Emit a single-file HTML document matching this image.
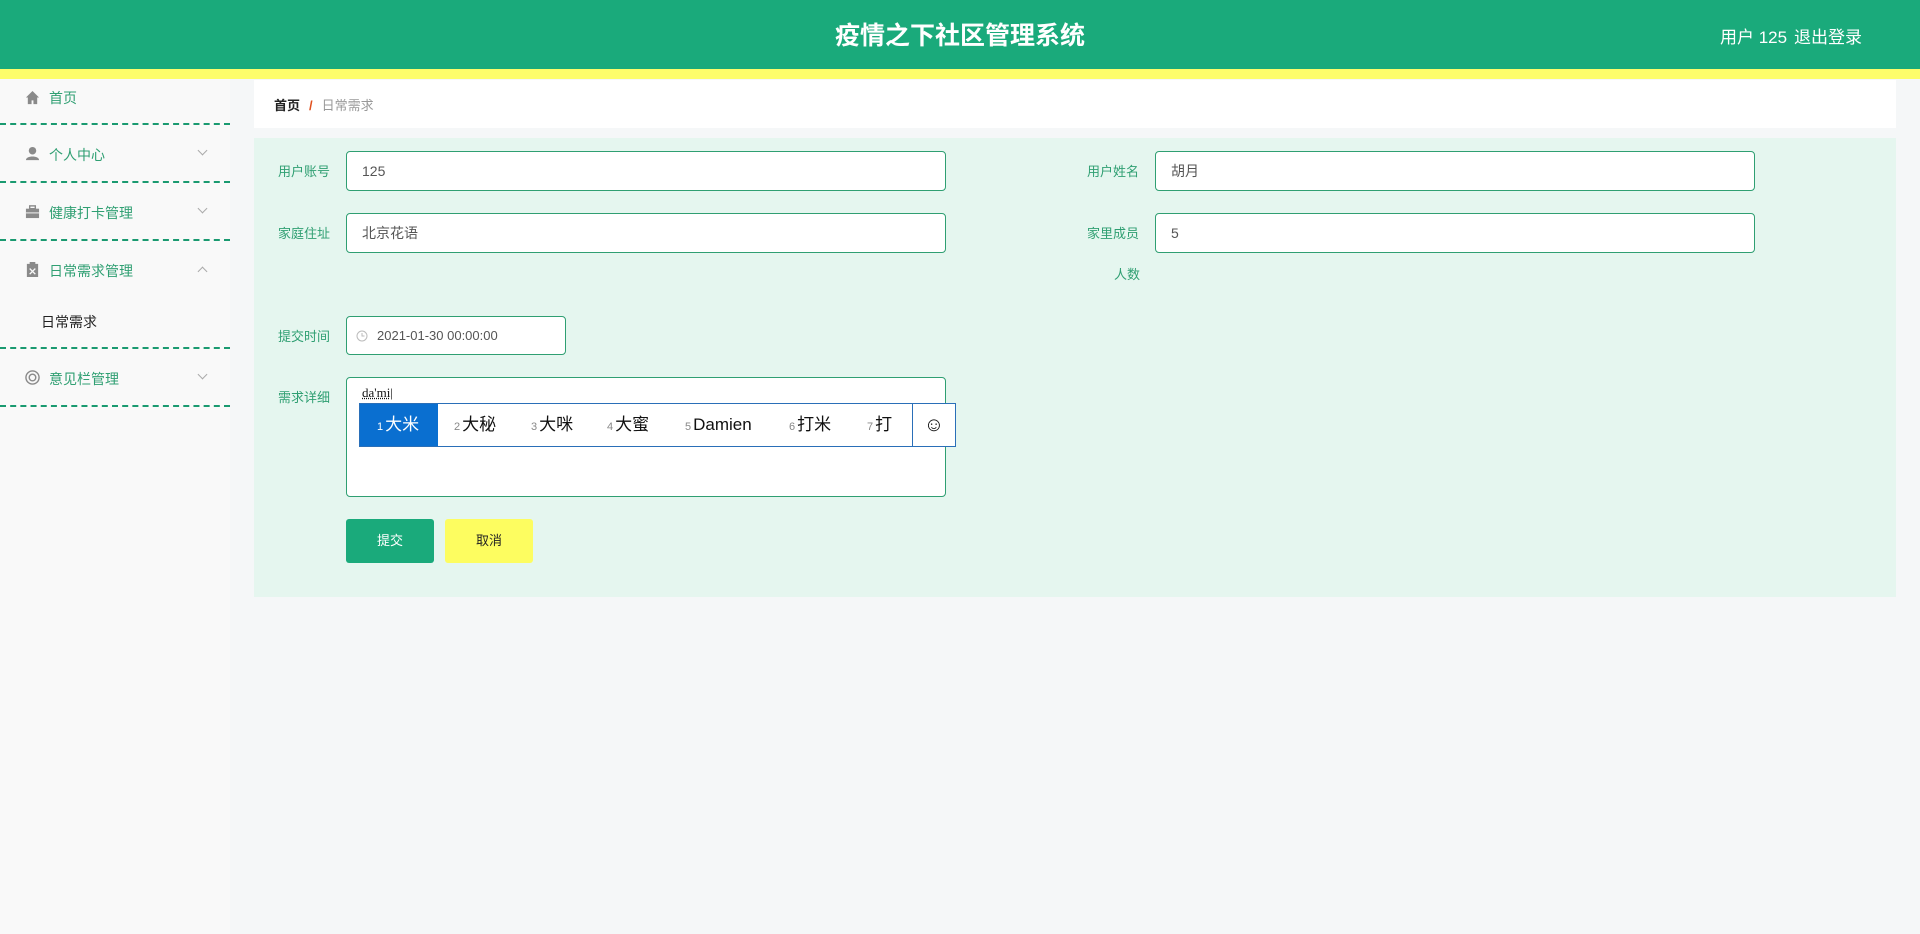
<!DOCTYPE html>
<html><head><meta charset="utf-8"><style>
*{box-sizing:border-box;margin:0;padding:0}
body{width:1920px;height:934px;background:#f5f7f8;font-family:"Liberation Sans","Noto Sans CJK SC",sans-serif;position:relative;overflow:hidden;font-size:14px}
.hdr{position:absolute;left:0;top:0;width:1920px;height:69px;background:#1aaa7b}
.yel{position:absolute;left:0;top:69px;width:1920px;height:10px;background:#fdfd6a}
.title{position:absolute;left:0;width:1920px;top:16px;text-align:center;color:#fff;font-size:25px;font-weight:bold}
.hr{position:absolute;top:23px;color:#fff;font-size:17px}
.side{position:absolute;left:0;top:79px;width:230px;height:855px;background:#f9f9f9}
.dash{position:absolute;left:0;width:230px;border-top:2px dashed #1a9a70}
.mi{position:absolute;left:49px;color:#2f9f72;font-size:14px}
.ic{position:absolute;left:25px;width:15px;height:15px}
.arr{position:absolute;left:199px;width:7px;height:7px;border-right:1px solid #aaa;border-bottom:1px solid #aaa}
.box{position:absolute;background:#fff}
.form{position:absolute;left:254px;top:138px;width:1642px;height:459px;background:#e5f6ef}
.lab{position:absolute;color:#2f9f72;font-size:13px}
.inp{position:absolute;background:#fff;border:1px solid #2f9f72;border-radius:4px;color:#555;font-size:14px;padding-left:15px;line-height:38px}
.btn{position:absolute;top:519px;height:44px;width:88px;border-radius:3px;text-align:center;line-height:44px;font-size:13px}
.ime{position:absolute;left:359px;top:403px;width:597px;height:44px;background:#fff;border:1px solid #2a6fb8;font-size:17px;color:#111;line-height:42px}
.ime span{position:absolute;top:0}
.ime small{font-size:11px;color:#888;margin-right:2px}
</style></head><body>
<div class="hdr"></div><div class="yel"></div>
<div class="title">疫情之下社区管理系统</div>
<div class="hr" style="left:1720px">用户 125</div>
<div class="hr" style="left:1794px">退出登录</div>

<div class="side"></div>
<svg class="ic" style="top:90px" viewBox="0 0 16 16"><path d="M8 1L1 8h2v7h4v-4h2v4h4V8h2z" fill="#8a8a8a"/></svg>
<div class="mi" style="top:88px">首页</div>
<div class="dash" style="top:123px"></div>
<svg class="ic" style="top:146px" viewBox="0 0 16 16"><circle cx="8" cy="5" r="4" fill="#8a8a8a"/><path d="M1 15c0-5 14-5 14 0z" fill="#8a8a8a"/></svg>
<div class="mi" style="top:145px">个人中心</div><div class="arr" style="top:147px;transform:rotate(45deg)"></div>
<div class="dash" style="top:181px"></div>
<svg class="ic" style="top:204px" viewBox="0 0 16 16"><rect x="1" y="5" width="14" height="10" fill="#8a8a8a"/><rect x="5" y="2" width="6" height="3" fill="none" stroke="#8a8a8a" stroke-width="1.5"/><rect x="1" y="9" width="14" height="1" fill="#f9f9f9"/></svg>
<div class="mi" style="top:203px">健康打卡管理</div><div class="arr" style="top:205px;transform:rotate(45deg)"></div>
<div class="dash" style="top:239px"></div>
<svg class="ic" style="top:262px" viewBox="0 0 16 16"><rect x="2" y="2" width="12" height="14" fill="#8a8a8a"/><rect x="5" y="0" width="6" height="3" fill="#8a8a8a"/><path d="M5 7l6 6M11 7l-6 6" stroke="#f9f9f9" stroke-width="1.5"/></svg>
<div class="mi" style="top:261px">日常需求管理</div><div class="arr" style="top:268px;transform:rotate(225deg)"></div>
<div style="position:absolute;left:41px;top:312px;font-size:14px;color:#222">日常需求</div>
<div class="dash" style="top:347px"></div>
<svg class="ic" style="top:370px" viewBox="0 0 16 16"><circle cx="8" cy="8" r="7" fill="none" stroke="#8a8a8a" stroke-width="1.5"/><circle cx="8" cy="8" r="3.5" fill="none" stroke="#8a8a8a" stroke-width="1.5"/></svg>
<div class="mi" style="top:369px">意见栏管理</div><div class="arr" style="top:371px;transform:rotate(45deg)"></div>
<div class="dash" style="top:405px"></div>

<div class="box" style="left:254px;top:80px;width:1642px;height:48px"></div>
<div style="position:absolute;left:274px;top:95px;font-size:13px"><b style="color:#222">首页</b><span style="color:#e0501e;margin:0 9px;font-weight:bold">/</span><span style="color:#999">日常需求</span></div>

<div class="form"></div>
<div class="lab" style="left:278px;top:161px">用户账号</div>
<div class="inp" style="left:346px;top:151px;width:600px;height:40px">125</div>
<div class="lab" style="left:1087px;top:161px">用户姓名</div>
<div class="inp" style="left:1155px;top:151px;width:600px;height:40px">胡月</div>
<div class="lab" style="left:278px;top:223px">家庭住址</div>
<div class="inp" style="left:346px;top:213px;width:600px;height:40px">北京花语</div>
<div class="lab" style="left:1087px;top:223px">家里成员</div>
<div class="inp" style="left:1155px;top:213px;width:600px;height:40px">5</div>
<div class="lab" style="left:1114px;top:264px">人数</div>
<div class="lab" style="left:278px;top:326px">提交时间</div>
<div class="inp" style="left:346px;top:316px;width:220px;height:39px;padding-left:30px;font-size:13px">2021-01-30 00:00:00</div>
<svg style="position:absolute;left:356px;top:330px" width="12" height="12" viewBox="0 0 12 12"><circle cx="6" cy="6" r="5" fill="none" stroke="#bbb"/><path d="M6 3v3h2.5" stroke="#bbb" fill="none"/></svg>
<div class="lab" style="left:278px;top:387px">需求详细</div>
<div class="inp" style="left:346px;top:377px;width:600px;height:120px;line-height:normal;padding-top:7px;font-family:'Liberation Serif',serif;color:#111;font-size:13px"><span style="text-decoration:underline dotted">da'mi</span>|</div>
<div class="ime">
<span style="left:0;width:78px;height:42px;background:#0a6fd0;color:#fff;padding-left:17px"><small style="color:#fff">1</small>大米</span>
<span style="left:94px"><small>2</small>大秘</span>
<span style="left:171px"><small>3</small>大咪</span>
<span style="left:247px"><small>4</small>大蜜</span>
<span style="left:325px"><small>5</small>Damien</span>
<span style="left:429px"><small>6</small>打米</span>
<span style="left:507px"><small>7</small>打</span>
<span style="left:552px;width:43px;height:42px;border-left:1px solid #2a6fb8;text-align:center;font-size:20px">☺</span>
</div>
<div class="btn" style="left:346px;background:#1aaa7b;color:#fff">提交</div>
<div class="btn" style="left:445px;background:#fdfd60;color:#222">取消</div>
</body></html>
